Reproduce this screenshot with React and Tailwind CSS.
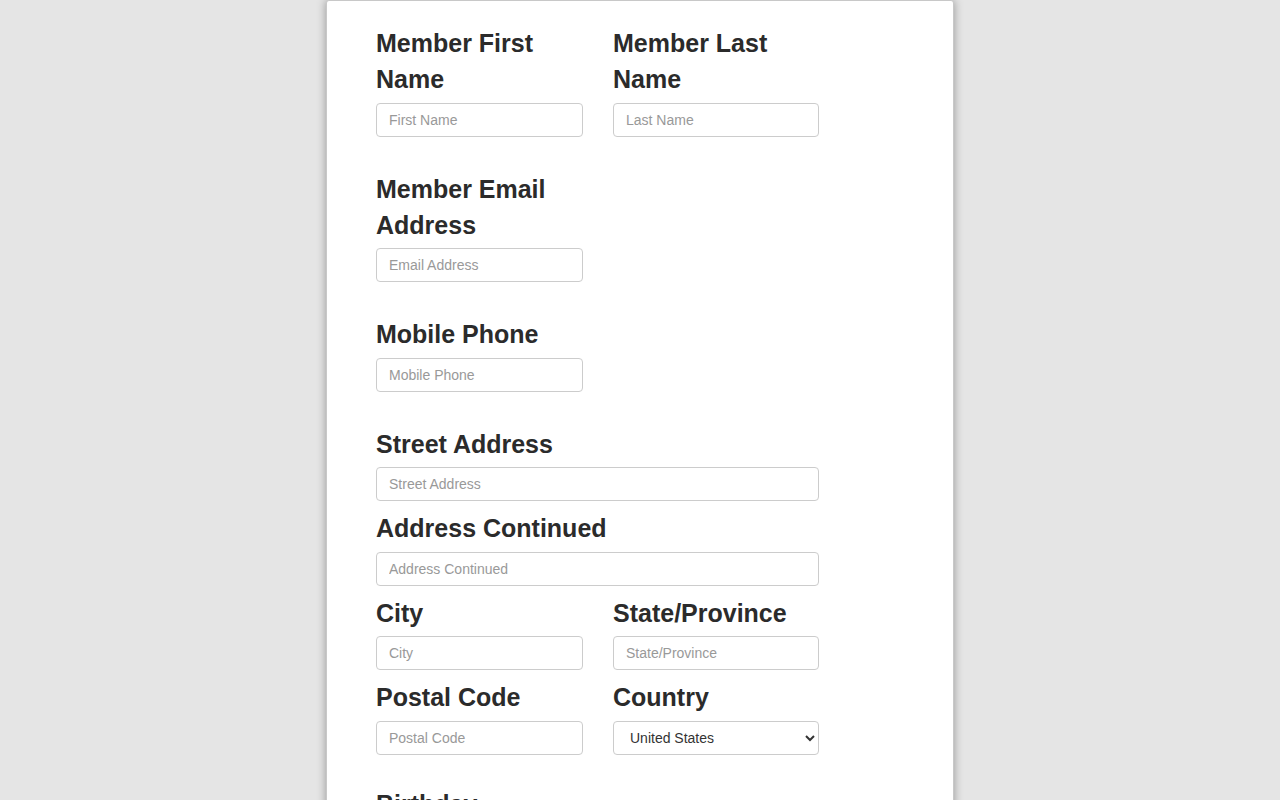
import React from 'react'

const labelCls = 'block text-[25px] leading-[36px] font-bold text-[#2b2b2b] mb-[5.5px]'
const inputCls = 'block w-full h-[34px] px-[12px] text-[14px] text-[#555] bg-white border border-[#ccc] rounded-[4px] placeholder:text-[#999] outline-none'

const Field = ({ label, placeholder, wide, right }) => (
  <div className={wide ? 'w-[443px]' : right ? 'w-[206px]' : 'w-[207px]'}>
    <label className={labelCls}>{label}</label>
    <input type="text" placeholder={placeholder} className={inputCls} />
  </div>
)

const App = () => {
  return (
    <div className="min-h-screen bg-[#e5e5e5] flex justify-center" style={{ fontFamily: '"Liberation Sans", Arial, sans-serif' }}>
      <div className="w-[628px] min-h-screen bg-white border border-[#c8c8c8] rounded-t-[3px] shadow-[0_0_10px_rgba(0,0,0,0.35)] pl-[49px] pr-[49px] pt-[24px]">
        {/* personal */}
        <div className="flex gap-[30px] mb-[34px]">
          <Field label="Member First Name" placeholder="First Name" />
          <Field label="Member Last Name" placeholder="Last Name" right />
        </div>
        <div className="flex gap-[30px] mb-[34px]">
          <Field label="Member Email Address" placeholder="Email Address" />
        </div>
        <div className="flex gap-[30px] mb-[34px]">
          <Field label="Mobile Phone" placeholder="Mobile Phone" />
        </div>

        {/* address */}
        <div className="flex flex-col gap-[9px] mb-[31px]">
          <Field label="Street Address" placeholder="Street Address" wide />
          <Field label="Address Continued" placeholder="Address Continued" wide />
          <div className="flex gap-[30px]">
            <Field label="City" placeholder="City" />
            <Field label="State/Province" placeholder="State/Province" right />
          </div>
          <div className="flex gap-[30px]">
            <Field label="Postal Code" placeholder="Postal Code" />
            <div className="w-[206px]">
              <label className={labelCls}>Country</label>
              <select
                className="block w-full h-[34px] pl-[12px] pr-[4px] text-[14px] text-[#333] bg-white border border-[#ccc] rounded-[4px] outline-none"
                defaultValue="US"
              >
                <option value="US">United States</option>
                <option value="CA">Canada</option>
                <option value="MX">Mexico</option>
              </select>
            </div>
          </div>
        </div>

        <div className="w-[207px]">
          <label className={labelCls}>Birthday</label>
          <input type="text" placeholder="MM/DD/YYYY" className={inputCls} />
        </div>
      </div>
    </div>
  )
}

export default App
